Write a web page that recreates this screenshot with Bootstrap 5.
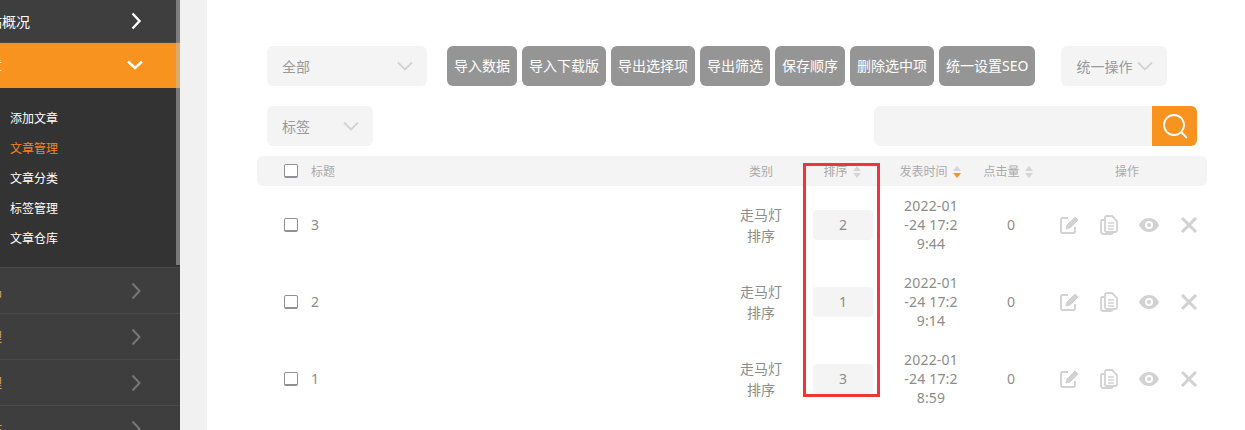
<!DOCTYPE html>
<html lang="zh-CN">
<head>
    <meta charset="UTF-8">
    <meta name="viewport" content="width=device-width, initial-scale=1.0">
    <title>文章管理</title>
    <link href="https://cdn.jsdelivr.net/npm/bootstrap@5.3.0/dist/css/bootstrap.min.css" rel="stylesheet">
    <style>
        html, body { height: 430px; overflow: hidden; }
        body { font-family: "Noto Sans", "Noto Sans CJK SC", sans-serif; font-size: 14px; color: #8c8c8c; background: #fff; }
        .shell { height: 430px; }

        .side { width: 180px; flex: none; background: #3e3e3e; color: #fff; overflow: hidden; position: relative; }
        .side-item { height: 46px; border-bottom: 1px solid #4a4a4a; padding-right: 37px; }
        .side-item.first { height: 43px; }
        .side-item.active { height: 45px; background: #f9931f; border-bottom-color: #f9931f; padding-right: 36px; }
        .side-label { width: 30px; overflow: hidden; white-space: nowrap; justify-content: flex-end; }
        .side-item.active .side-label { width: 2px; }
        .side-item.off .side-label { width: 2px; color: #c9a26a; font-size: 14px; }
        .side-item.off svg { stroke: #777; }
        .side-sub { background: #333; height: 180px; padding: 16px 0 0 10px; border-bottom: 1px solid #4a4a4a; font-size: 12px; }
        .side-sub a { display: block; height: 30px; line-height: 30px; color: #fff; text-decoration: none; }
        .side-sub a.current { color: #f9831f; }
        .side-thumb { position: absolute; top: 0; right: 0; width: 4px; height: 265px; background: rgba(190, 190, 190, .5); }

        .gutter { width: 27px; flex: none; background: #f1f1f1; }
        .main { flex: 1; min-width: 0; padding: 46px 48px 0 60px; }

        .pick { height: 40px; background: #f4f4f4; border-radius: 6px; padding: 0 14px 0 15px; color: #999; }
        .pick svg { stroke: #d3d3d3; }
        .pick-all { width: 160px; margin-right: 20px; }
        .pick-tag { width: 106px; }
        .pick-batch { width: 106px; margin-left: 26px; }
        .btn-grey { height: 40px; padding: 0 7px; background: #959595; border: 0; border-radius: 6px; color: #fff; font-size: 14px; line-height: 40px; white-space: nowrap; }
        .btn-grey:hover { background: #858585; color: #fff; }
        .gap-btn { gap: 5px; }

        .tool-row2 { margin-top: 20px; }
        .search-box { width: 323px; height: 40px; background: #f4f4f4; border-radius: 6px; overflow: hidden; }
        .search-go { width: 45px; background: #f9931f; border: 0; padding: 0; }

        .list-wrap { margin: 10px -10px 0 -10px; position: relative; }
        .cols { display: grid; grid-template-columns: 54px 410px 80px 84px 92px 68px 1fr; }
        .list-head { height: 30px; padding-top: 1px; background: #f4f4f4; border-radius: 6px; font-size: 12px; color: #aaa; }
        .list-head .tick { margin-top: -1px; }
        .head-sort { padding-right: 2px; }
        .head-time { padding-right: 2px; }
        .head-click { padding-right: 6px; }
        .head-ops { padding-left: 2px; }
        .list-row { height: 77px; }
        .tick { display: block; width: 14px; height: 14px; margin-left: 27px; border: 1.5px solid #8f8f94; border-bottom-width: 2px; border-radius: 2px; background: #fff; }
        .num-box { width: 60px; height: 30px; background: #f4f4f4; border-radius: 4px; line-height: 30px; text-align: center; }
        .time-cell { line-height: 19px; width: 56px; word-break: break-all; text-align: center; letter-spacing: .2px; }
        .sort-mark { margin-left: 5px; }
        .ops { gap: 20px; padding-left: 14px; }
        .ops svg { width: 20px; flex: none; }
        .mark-box { position: absolute; left: 546px; top: 7px; width: 77px; height: 234px; border: 3px solid #ef3535; pointer-events: none; }
    </style>
</head>
<body>
    <div class="shell d-flex">
        <nav class="side">
            <div class="side-item first d-flex align-items-center justify-content-between">
                <div class="side-label d-flex">网站概况</div>
                <svg width="12" height="18" viewBox="0 0 12 18" fill="none" stroke="#fff" stroke-width="2.4"><path d="M1.500 1.500l7 7.500-7 7.500"/></svg>
            </div>
            <div class="side-item active d-flex align-items-center justify-content-between">
                <div class="side-label d-flex">文章</div>
                <svg width="18" height="12" viewBox="0 0 18 12" fill="none" stroke="#fff" stroke-width="2.4"><path d="M2 2.500l7 6.500 7-6.500"/></svg>
            </div>
            <div class="side-sub">
                <a href="#">添加文章</a>
                <a href="#" class="current">文章管理</a>
                <a href="#">文章分类</a>
                <a href="#">标签管理</a>
                <a href="#">文章仓库</a>
            </div>
            <div class="side-item off d-flex align-items-center justify-content-between">
                <div class="side-label d-flex">商品</div>
                <svg width="12" height="18" viewBox="0 0 12 18" fill="none" stroke-width="2"><path d="M1.500 1.500l7 7.500-7 7.500"/></svg>
            </div>
            <div class="side-item off d-flex align-items-center justify-content-between">
                <div class="side-label d-flex">管理</div>
                <svg width="12" height="18" viewBox="0 0 12 18" fill="none" stroke-width="2"><path d="M1.500 1.500l7 7.500-7 7.500"/></svg>
            </div>
            <div class="side-item off d-flex align-items-center justify-content-between">
                <div class="side-label d-flex">管理</div>
                <svg width="12" height="18" viewBox="0 0 12 18" fill="none" stroke-width="2"><path d="M1.500 1.500l7 7.500-7 7.500"/></svg>
            </div>
            <div class="side-item off d-flex align-items-center justify-content-between">
                <div class="side-label d-flex">站</div>
                <svg width="12" height="18" viewBox="0 0 12 18" fill="none" stroke-width="2"><path d="M1.500 1.500l7 7.500-7 7.500"/></svg>
            </div>
            <div class="side-thumb"></div>
        </nav>
        <div class="gutter"></div>
        <main class="main">
            <div class="d-flex">
                <div class="pick pick-all d-flex align-items-center justify-content-between">
                    <span>全部</span>
                    <svg width="16" height="10" viewBox="0 0 16 10" fill="none" stroke-width="1.8"><path d="M1 1.500l7 7 7-7"/></svg>
                </div>
                <div class="d-flex gap-btn">
                    <button class="btn-grey">导入数据</button>
                    <button class="btn-grey">导入下载版</button>
                    <button class="btn-grey">导出选择项</button>
                    <button class="btn-grey">导出筛选</button>
                    <button class="btn-grey">保存顺序</button>
                    <button class="btn-grey">删除选中项</button>
                    <button class="btn-grey">统一设置SEO</button>
                </div>
                <div class="pick pick-batch d-flex align-items-center justify-content-between">
                    <span>统一操作</span>
                    <svg width="16" height="10" viewBox="0 0 16 10" fill="none" stroke-width="1.8"><path d="M1 1.500l7 7 7-7"/></svg>
                </div>
            </div>
            <div class="tool-row2 d-flex justify-content-between">
                <div class="pick pick-tag d-flex align-items-center justify-content-between">
                    <span>标签</span>
                    <svg width="16" height="10" viewBox="0 0 16 10" fill="none" stroke-width="1.8"><path d="M1 1.500l7 7 7-7"/></svg>
                </div>
                <div class="search-box d-flex justify-content-end">
                    <button class="search-go d-flex align-items-center justify-content-center" aria-label="搜索">
                        <svg width="26" height="26" viewBox="0 0 26 26" fill="none" stroke="#fff" stroke-width="1.8"><circle cx="12" cy="12" r="10"/><path d="M19.500 19.500l5.500 5.500"/></svg>
                    </button>
                </div>
            </div>
            <div class="list-wrap">
                <div class="list-head cols align-items-center text-center">
                    <span class="tick"></span>
                    <span class="text-start">标题</span>
                    <span>类别</span>
                    <span class="head-sort">排序<svg class="sort-mark" width="8" height="12" viewBox="0 0 8 12"><path d="M4 0l4 5H0z" fill="#d5d5d5"/><path d="M4 12L0 7h8z" fill="#d5d5d5"/></svg></span>
                    <span class="head-time">发表时间<svg class="sort-mark" width="8" height="12" viewBox="0 0 8 12"><path d="M4 0l4 5H0z" fill="#d5d5d5"/><path d="M4 12L0 7h8z" fill="#f9931f"/></svg></span>
                    <span class="head-click">点击量<svg class="sort-mark" width="8" height="12" viewBox="0 0 8 12"><path d="M4 0l4 5H0z" fill="#d5d5d5"/><path d="M4 12L0 7h8z" fill="#d5d5d5"/></svg></span>
                    <span class="head-ops">操作</span>
                </div>
                <div id="rows"></div>
                <div class="mark-box"></div>
            </div>
        </main>
    </div>
    <script>
        const posts = [
            { title: '3', order: 2, time: '2022-01-24 17:29:44' },
            { title: '2', order: 1, time: '2022-01-24 17:29:14' },
            { title: '1', order: 3, time: '2022-01-24 17:28:59' }
        ];
        const icons = `
            <svg height="20" viewBox="0 0 20 20" fill="none" stroke="#d2d2d2" stroke-width="2"><path d="M9 3H4a2 2 0 0 0-2 2v11a2 2 0 0 0 2 2h10a2 2 0 0 0 2-2v-4"/><path d="M7 14l1-4 8-8 3 3-8 8z" fill="#d2d2d2" stroke-width="1"/></svg>
            <svg height="20" viewBox="0 0 20 20" fill="none" stroke="#d2d2d2" stroke-width="1.800"><path d="M5 5H3.500a1.500 1.500 0 0 0-1.500 1.500v10A2.500 2.500 0 0 0 4.500 19H12a1.500 1.500 0 0 0 1.500-1.500"/><path d="M6 2.500A1.500 1.500 0 0 1 7.500 1H13l5 5v9.500a1.500 1.500 0 0 1-1.500 1.500h-9A1.500 1.500 0 0 1 6 15.500z"/><path d="M9 8h6M9 11h6M9 14h6" stroke-width="1.500"/></svg>
            <svg height="14" viewBox="0 0 20 14"><path fill-rule="evenodd" d="M10 0c5 0 8.500 3.500 10 7-1.500 3.500-5 7-10 7S1.500 10.500 0 7c1.500-3.500 5-7 10-7zm0 3a4 4 0 1 0 0 8 4 4 0 0 0 0-8z" fill="#d2d2d2"/><circle cx="10" cy="7" r="2" fill="#d2d2d2"/></svg>
            <svg height="16" viewBox="0 0 20 16" fill="none" stroke="#d2d2d2" stroke-width="3"><path d="M3 1l14 14M17 1L3 15"/></svg>`;
        document.getElementById('rows').innerHTML = posts.map(post => `
            <div class="list-row cols align-items-center text-center">
                <span class="tick"></span>
                <span class="text-start">${post.title}</span>
                <span class="px-3">走马灯排序</span>
                <div class="d-flex justify-content-center"><span class="num-box">${post.order}</span></div>
                <div class="d-flex justify-content-center"><span class="time-cell">${post.time}</span></div>
                <span>0</span>
                <div class="ops d-flex align-items-center">${icons}</div>
            </div>
        `).join('');
    </script>
</body>
</html>
